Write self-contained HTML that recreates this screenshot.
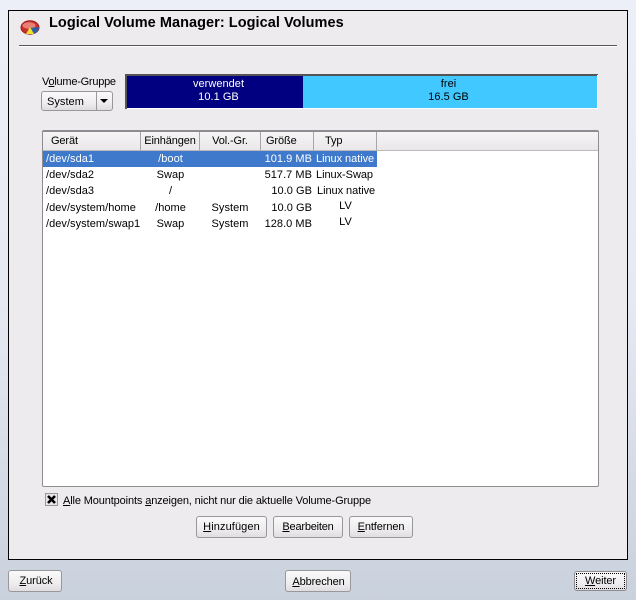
<!DOCTYPE html>
<html>
<head>
<meta charset="utf-8">
<style>
html,body{margin:0;padding:0}
body{width:636px;height:600px;overflow:hidden;position:relative;background:linear-gradient(#eceef8 0,#e6e9f2 300px,#c9d1dd 600px);font-family:"Liberation Sans",sans-serif;font-size:11px;color:#000}
div,span.a{position:absolute;white-space:nowrap;box-sizing:border-box}
#panel{left:8px;top:10px;width:620px;height:550px;background:#eeebee;border:1px solid #000}
.t{line-height:14px;letter-spacing:.04px}
.c{text-align:center}
.r{text-align:right}
.btn{background:linear-gradient(#fbfafb,#efedef 60%,#e0dde0);border:1px solid #99979b;border-radius:3px;text-align:center;line-height:20px;letter-spacing:-.1px}
.hd{top:132px;height:19px;background:linear-gradient(#f6f5f6,#e9e7e9);border-right:1px solid #a8a6aa;border-bottom:1px solid #bbb;text-align:center;line-height:19px;letter-spacing:-.12px}
u{text-decoration:underline}
</style>
</head>
<body>
<div id="panel"></div>

<svg style="position:absolute;left:20px;top:19px" width="20" height="17" viewBox="0 0 20 17">
<ellipse cx="10" cy="8.5" rx="9" ry="6.7" fill="#c8302c" stroke="#a01a18"/>
<ellipse cx="9" cy="6.5" rx="6.5" ry="3.2" fill="#e88078"/>
<path d="M10 9 L19 8 C19 12 16 15 12 15 Z" fill="#2f5f9f"/>
<path d="M10 8 L14 15 L6 15 Z" fill="#f2e030"/>
</svg>

<div style="left:49px;top:15px;font-size:14.5px;font-weight:bold;line-height:17px;letter-spacing:.05px">Logical Volume Manager: Logical Volumes</div>

<div style="left:19px;top:45px;width:598px;height:1px;background:#555"></div>
<div style="left:19px;top:46px;width:598px;height:1px;background:#fff"></div>

<div class="t" style="left:42px;top:75px;letter-spacing:-.25px">V<u>o</u>lume-Gruppe</div>
<div class="btn" style="left:41px;top:91px;width:72px;height:20px"></div>
<div class="t" style="left:47px;top:95px">System</div>
<div style="left:96px;top:92px;width:1px;height:18px;background:#999"></div>
<div style="left:100px;top:99px;width:0;height:0;border-left:4px solid transparent;border-right:4px solid transparent;border-top:4px solid #000"></div>

<div style="left:125px;top:74px;width:473px;height:2px;background:#555"></div>
<div style="left:125px;top:74px;width:2px;height:35px;background:#555"></div>
<div style="left:127px;top:76px;width:176px;height:32px;background:#000080"></div>
<div style="left:303px;top:76px;width:294px;height:32px;background:#40c8ff"></div>
<div style="left:127px;top:108px;width:471px;height:1px;background:#fff"></div>
<div style="left:597px;top:75px;width:1px;height:34px;background:#fff"></div>
<div class="t c" style="left:127px;top:78px;width:183px;color:#fff;line-height:13px">verwendet<br>10.1 GB</div>
<div class="t c" style="left:303px;top:78px;width:291px;line-height:13px">frei<br>16.5 GB</div>

<div style="left:42px;top:130px;width:557px;height:357px;background:#fff;border:1px solid #8e8c90;border-top:2px solid #8e8c90;border-radius:2px"></div>
<div style="left:43px;top:132px;width:555px;height:19px;background:linear-gradient(#f6f5f6,#e9e7e9);border-bottom:1px solid #bbb"></div>
<div class="hd" style="left:43px;width:98px;text-align:left;padding-left:8px">Gerät</div>
<div class="hd" style="left:141px;width:59px">Einhängen</div>
<div class="hd" style="left:200px;width:61px">Vol.-Gr.</div>
<div class="hd" style="left:261px;width:53px;text-align:left;padding-left:5px">Größe</div>
<div class="hd" style="left:314px;width:63px;text-align:left;padding-left:11px">Typ</div>

<div style="left:43px;top:151px;width:334px;height:16px;background:#3e79cb"></div>

<div class="t" style="left:46px;top:152px;color:#fff">/dev/sda1</div>
<div class="t c" style="left:141px;top:152px;width:59px;color:#fff">/boot</div>
<div class="t r" style="left:261px;top:152px;width:51px;color:#fff">101.9 MB</div>
<div class="t" style="left:316px;top:152px;color:#fff;letter-spacing:-.05px">Linux native</div>

<div class="t" style="left:46px;top:168px">/dev/sda2</div>
<div class="t c" style="left:141px;top:168px;width:59px">Swap</div>
<div class="t r" style="left:261px;top:168px;width:51px">517.7 MB</div>
<div class="t" style="left:316px;top:168px;letter-spacing:-.05px">Linux-Swap</div>

<div class="t" style="left:46px;top:184px">/dev/sda3</div>
<div class="t c" style="left:141px;top:184px;width:59px">/</div>
<div class="t r" style="left:261px;top:184px;width:51px">10.0 GB</div>
<div class="t" style="left:317px;top:184px;letter-spacing:-.05px">Linux native</div>

<div class="t" style="left:46px;top:201px">/dev/system/home</div>
<div class="t c" style="left:141px;top:201px;width:59px">/home</div>
<div class="t c" style="left:200px;top:201px;width:60px">System</div>
<div class="t r" style="left:261px;top:201px;width:51px">10.0 GB</div>
<div class="t c" style="left:314px;top:199px;width:63px">LV</div>

<div class="t" style="left:46px;top:217px">/dev/system/swap1</div>
<div class="t c" style="left:141px;top:217px;width:59px">Swap</div>
<div class="t c" style="left:200px;top:217px;width:60px">System</div>
<div class="t r" style="left:261px;top:217px;width:51px">128.0 MB</div>
<div class="t c" style="left:314px;top:215px;width:63px">LV</div>

<div style="left:45px;top:493px;width:13px;height:13px;background:#e8e6e8;border:1px solid #99979b"></div>
<svg style="position:absolute;left:45px;top:493px" width="13" height="13" viewBox="0 0 13 13"><path d="M3 3 L10 10 M10 3 L3 10" stroke="#000" stroke-width="2.6"/></svg>
<div class="t" style="left:63px;top:494px;letter-spacing:-.13px"><u>A</u>lle Mountpoints <u>a</u>nzeigen, nicht nur die aktuelle Volume-Gruppe</div>

<div class="btn" style="left:196px;top:516px;width:71px;height:22px;letter-spacing:.1px"><u>H</u>inzufügen</div>
<div class="btn" style="left:273px;top:516px;width:70px;height:22px;line-height:21px;letter-spacing:-.2px"><u>B</u>earbeiten</div>
<div class="btn" style="left:349px;top:516px;width:64px;height:22px;line-height:21px;letter-spacing:-.1px"><u>E</u>ntfernen</div>

<div class="btn" style="left:8px;top:570px;width:54px;height:22px;padding-left:2px"><u>Z</u>urück</div>
<div class="btn" style="left:285px;top:570px;width:66px;height:22px;line-height:22px;padding-left:1px"><u>A</u>bbrechen</div>
<div class="btn" style="left:574px;top:571px;width:53px;height:20px;line-height:18px;border-color:#8e8c90"><span style="display:block;margin:2px;height:14px;line-height:15px;outline:1px dotted #000"><u>W</u>eiter</span></div>
</body>
</html>
